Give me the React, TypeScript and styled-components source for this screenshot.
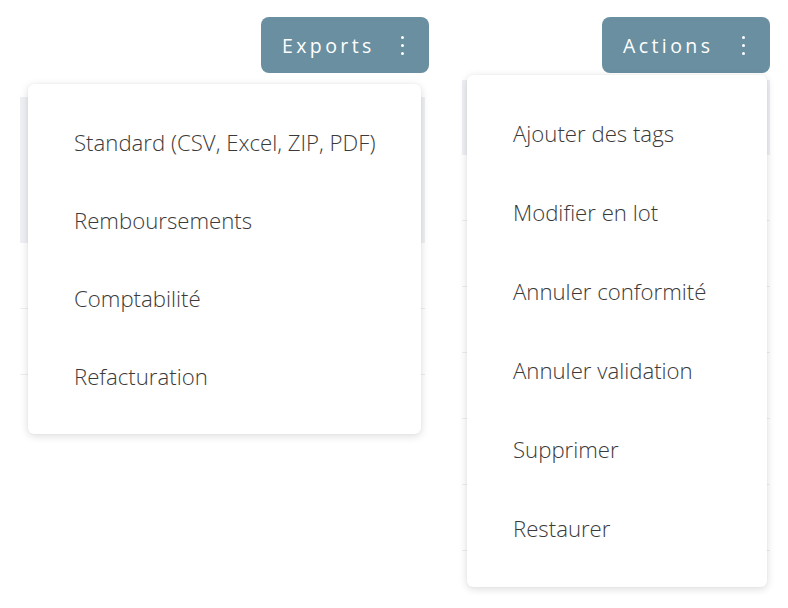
import React from 'react';
import styled, { createGlobalStyle } from 'styled-components';

const GlobalStyle = createGlobalStyle`
  html, body {
    margin: 0;
    padding: 0;
    background: #ffffff;
  }
  body {
    font-family: 'Open Sans', 'Liberation Sans', sans-serif;
  }
`;

interface DropdownProps {
  label: string;
  items: string[];
  width: number;
  tableWidth: number;
  tableHeight: number;
  tableOffset: number;
  menuTop: number;
  menuLeft: number;
  menuWidth: number;
  rowHeight: number;
  headerHeight: number;
}

const Dropdown: React.FC<DropdownProps> = ({
  label,
  items,
  width,
  tableWidth,
  tableHeight,
  tableOffset,
  menuTop,
  menuLeft,
  menuWidth,
  rowHeight,
  headerHeight
}) => (
  <Column $width={width}>
    <MenuButton>
      <span>{label}</span>
      <Dots>
        <i />
        <i />
        <i />
      </Dots>
    </MenuButton>
    <TableBehind
      $width={tableWidth}
      $height={tableHeight}
      $offset={tableOffset}
      $header={headerHeight}
    />
    <Menu $top={menuTop} $left={menuLeft} $width={menuWidth}>
      {items.map((item) => (
        <MenuItem key={item} $height={rowHeight}>
          {item}
        </MenuItem>
      ))}
    </Menu>
  </Column>
);

const App: React.FC = () => (
  <>
    <GlobalStyle />
    <Page>
      <Dropdown
        label="Exports"
        items={['Standard (CSV, Excel, ZIP, PDF)', 'Remboursements', 'Comptabilité', 'Refacturation']}
        width={409}
        tableWidth={405}
        tableHeight={341}
        tableOffset={24}
        menuTop={67}
        menuLeft={8}
        menuWidth={393}
        rowHeight={78}
        headerHeight={146}
      />
      <Dropdown
        label="Actions"
        items={[
          'Ajouter des tags',
          'Modifier en lot',
          'Annuler conformité',
          'Annuler validation',
          'Supprimer',
          'Restaurer'
        ]}
        width={308}
        tableWidth={308}
        tableHeight={515}
        tableOffset={7}
        menuTop={58}
        menuLeft={5}
        menuWidth={300}
        rowHeight={79}
        headerHeight={75}
      />
    </Page>
  </>
);

const Page = styled.div`
  display: flex;
  align-items: flex-start;
  gap: 33px;
  padding: 17px 0 0 20px;
`;

const Column = styled.div<{ $width: number }>`
  position: relative;
  display: flex;
  flex-direction: column;
  align-items: flex-end;
  width: ${(p) => p.$width}px;
`;

const MenuButton = styled.button`
  display: flex;
  align-items: center;
  justify-content: space-between;
  width: 168px;
  height: 56px;
  padding: 0 25px 0 21px;
  border: none;
  border-radius: 8px;
  background: #6a8fa0;
  color: #ffffff;
  font-family: 'Open Sans', 'Liberation Sans', sans-serif;
  font-size: 19.5px;
  letter-spacing: 3.4px;
  cursor: pointer;
`;

const Dots = styled.span`
  display: flex;
  flex-direction: column;
  gap: 5px;
  i {
    display: block;
    width: 3px;
    height: 3px;
    border-radius: 50%;
    background: #ffffff;
  }
`;

const TableBehind = styled.div<{ $width: number; $height: number; $offset: number; $header: number }>`
  align-self: flex-start;
  width: ${(p) => p.$width}px;
  height: ${(p) => p.$height}px;
  margin-top: ${(p) => p.$offset}px;
  background:
    linear-gradient(#eef0f4, #eef0f4) top / 100% ${(p) => p.$header}px no-repeat,
    repeating-linear-gradient(
      to bottom,
      #ffffff 0,
      #ffffff 65px,
      #eceef1 65px,
      #eceef1 66px
    );
  background-position: top, 0 ${(p) => p.$header}px;
`;

const Menu = styled.ul<{ $top: number; $left: number; $width: number }>`
  position: absolute;
  top: ${(p) => p.$top}px;
  left: ${(p) => p.$left}px;
  width: ${(p) => p.$width}px;
  margin: 0;
  padding: 19px 0;
  list-style: none;
  background: #ffffff;
  border-radius: 6px;
  box-shadow: 0 2px 8px rgba(0, 0, 0, 0.14), 0 0 2px rgba(0, 0, 0, 0.06);
`;

const MenuItem = styled.li<{ $height: number }>`
  display: flex;
  align-items: center;
  height: ${(p) => p.$height}px;
  padding-left: 46px;
  color: #3a3a3a;
  font-size: 22.2px;
  font-weight: 300;
  white-space: nowrap;
`;

export default App;
